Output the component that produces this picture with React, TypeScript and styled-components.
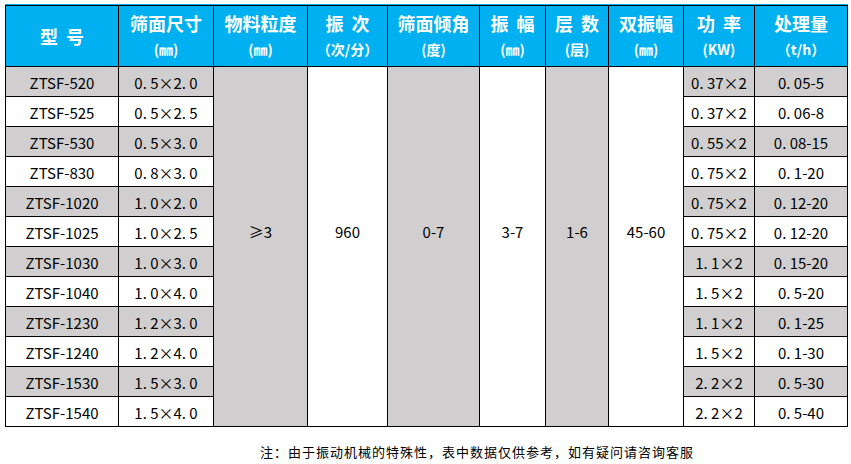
import React from "react";
import styled, { createGlobalStyle } from "styled-components";

const Global = createGlobalStyle`
  html, body { margin: 0; padding: 0; background: #ffffff; }
  body { font-family: "Noto Sans CJK SC", "Noto Sans", sans-serif; }
`;

const Page = styled.div`
  width: 851px;
  height: 464px;
  padding: 4px 0 0 5px;
  box-sizing: border-box;
  display: flex;
  flex-direction: column;
`;

const TopLine = styled.div`
  width: 843px;
  height: 1px;
  background: #00b0f0;
`;

const Grid = styled.div`
  display: grid;
  width: 843px;
  box-sizing: border-box;
  grid-template-columns: 112px 94px 93px 79px 91px 65px 62px 74px 70px 92px;
  grid-template-rows: 60px repeat(12, 29px);
  gap: 1px;
  padding: 1px;
  background: #000000;
`;

const HeadCell = styled.div`
  background: #00b0f0;
  color: #ffffff;
  font-weight: 700;
  display: flex;
  flex-direction: column;
  align-items: center;
  justify-content: center;
  white-space: pre;
`;

const HeadTitle = styled.div`
  font-size: 18px;
  line-height: 26px;
`;

const HeadSub = styled.div`
  font-size: 14px;
  line-height: 26px;
`;

const Cell = styled.div<{ $shade: boolean }>`
  background: ${(p) => (p.$shade ? "#d0cece" : "#ffffff")};
  color: #000000;
  font-size: 15px;
  display: flex;
  align-items: center;
  justify-content: center;
  padding-top: 2px;
  box-sizing: border-box;
  white-space: pre;
`;

const Merged = styled(Cell)`
  grid-row: span 12;
  padding-top: 0;
  padding-bottom: 30px;
`;

const Note = styled.div`
  margin: 15px 0 0 255px;
  font-size: 13px;
  letter-spacing: 1px;
  line-height: 20px;
  color: #000000;
`;

const headers: { title: string; sub?: string }[] = [
  { title: "型  号" },
  { title: "筛面尺寸", sub: "(㎜)" },
  { title: "物料粒度", sub: "(㎜)" },
  { title: "振  次", sub: "（次/分）" },
  { title: "筛面倾角", sub: "(度)" },
  { title: "振  幅", sub: "(㎜)" },
  { title: "层  数", sub: "(层)" },
  { title: "双振幅", sub: "(㎜)" },
  { title: "功  率", sub: "(KW)" },
  { title: "处理量", sub: "（t/h）" },
];

const rows: [string, string, string, string][] = [
  ["ZTSF-520", "0. 5×2. 0", "0. 37×2", "0. 05-5"],
  ["ZTSF-525", "0. 5×2. 5", "0. 37×2", "0. 06-8"],
  ["ZTSF-530", "0. 5×3. 0", "0. 55×2", "0. 08-15"],
  ["ZTSF-830", "0. 8×3. 0", "0. 75×2", "0. 1-20"],
  ["ZTSF-1020", "1. 0×2. 0", "0. 75×2", "0. 12-20"],
  ["ZTSF-1025", "1. 0×2. 5", "0. 75×2", "0. 12-20"],
  ["ZTSF-1030", "1. 0×3. 0", "1. 1×2", "0. 15-20"],
  ["ZTSF-1040", "1. 0×4. 0", "1. 5×2", "0. 5-20"],
  ["ZTSF-1230", "1. 2×3. 0", "1. 1×2", "0. 1-25"],
  ["ZTSF-1240", "1. 2×4. 0", "1. 5×2", "0. 1-30"],
  ["ZTSF-1530", "1. 5×3. 0", "2. 2×2", "0. 5-30"],
  ["ZTSF-1540", "1. 5×4. 0", "2. 2×2", "0. 5-40"],
];

const merged: { text: string; shade: boolean }[] = [
  { text: "≥3", shade: true },
  { text: "960", shade: false },
  { text: "0-7", shade: true },
  { text: "3-7", shade: false },
  { text: "1-6", shade: true },
  { text: "45-60", shade: false },
];

export default function App() {
  return (
    <>
      <Global />
      <Page>
        <TopLine />
        <Grid>
          {headers.map((h) => (
            <HeadCell key={h.title}>
              <HeadTitle>{h.title}</HeadTitle>
              {h.sub && <HeadSub>{h.sub}</HeadSub>}
            </HeadCell>
          ))}
          {rows.map((r, i) => {
            const shade = i % 2 === 0;
            return (
              <React.Fragment key={r[0]}>
                <Cell $shade={shade}>{r[0]}</Cell>
                <Cell $shade={shade}>{r[1]}</Cell>
                {i === 0 &&
                  merged.map((m) => (
                    <Merged key={m.text} $shade={m.shade}>
                      {m.text}
                    </Merged>
                  ))}
                <Cell $shade={shade}>{r[2]}</Cell>
                <Cell $shade={shade}>{r[3]}</Cell>
              </React.Fragment>
            );
          })}
        </Grid>
        <Note>注：由于振动机械的特殊性，表中数据仅供参考，如有疑问请咨询客服</Note>
      </Page>
    </>
  );
}
